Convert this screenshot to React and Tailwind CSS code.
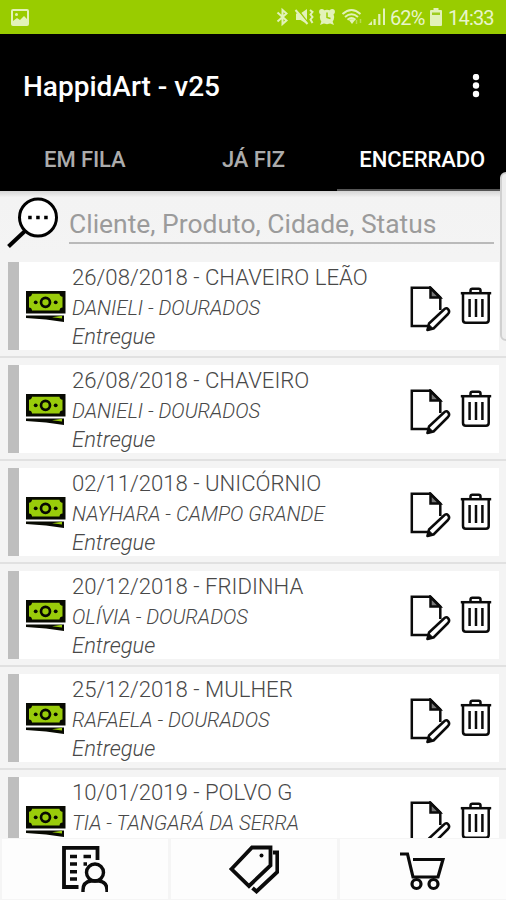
import React from 'react';

const orders = [
  { title: '26/08/2018 - CHAVEIRO LEÃO', client: 'DANIELI - DOURADOS', status: 'Entregue' },
  { title: '26/08/2018 - CHAVEIRO', client: 'DANIELI - DOURADOS', status: 'Entregue' },
  { title: '02/11/2018 - UNICÓRNIO', client: 'NAYHARA - CAMPO GRANDE', status: 'Entregue' },
  { title: '20/12/2018 - FRIDINHA', client: 'OLÍVIA - DOURADOS', status: 'Entregue' },
  { title: '25/12/2018 - MULHER', client: 'RAFAELA - DOURADOS', status: 'Entregue' },
  { title: '10/01/2019 - POLVO G', client: 'TIA - TANGARÁ DA SERRA', status: '' },
];

function MoneyIcon() {
  return (
    <svg className="block h-8 w-10 shrink-0" viewBox="0 0 40 32">
      <rect x="0" y="0" width="39.5" height="22.5" fill="#080a02" />
      <path d="M6 2.800H33.500Q33.700 5.500 36.500 5.700V16.500Q33.700 16.700 33.500 19.500H6Q5.800 16.700 3 16.500V5.700Q5.800 5.500 6 2.800Z" fill="#99cc0a" />
      <circle cx="19.500" cy="11.300" r="4.500" fill="none" stroke="#080a02" strokeWidth="2.700" />
      <circle cx="9.700" cy="11.300" r="1.900" fill="#080a02" />
      <circle cx="29.700" cy="11.300" r="1.900" fill="#080a02" />
      <path d="M0 24.500H38V31L20 28.500L0 27Z" fill="#080a02" />
      <path d="M26 26.200L36 24.700V27.500Z" fill="#99cc0a" />
    </svg>
  );
}

function EditIcon() {
  return (
    <svg className="block h-[46px] w-[42px] shrink-0" viewBox="0 0 42 46" fill="none" stroke="#0b0b0b" strokeWidth="2.500">
      <path d="M18 40H1.800V1.800H20.500L30.300 11.500V24" />
      <path d="M20.500 2V11.500H30Z" fill="#777" />
      <path d="M17.500 44L19 37.500L34 23.500Q36.300 21.200 38.200 23.300Q40.200 25.600 38 28L23.500 42.500Z" strokeLinejoin="round" />
      <path d="M17 44.500L18.500 38L23 42.500Z" fill="#0b0b0b" strokeWidth="1" />
    </svg>
  );
}

function TrashIcon() {
  return (
    <svg className="block h-[38px] w-8 shrink-0" viewBox="0 0 32 38" fill="none" stroke="#0b0b0b" strokeWidth="2.500">
      <path d="M0.800 6.200H31.200" />
      <path d="M10.500 6V3.500Q10.500 1.700 12.300 1.700H18.700Q20.500 1.700 20.500 3.500V6" />
      <path d="M3 6V33Q3 35.700 5.700 35.700H26Q28.700 35.700 28.700 33V6" />
      <path d="M9.600 12V30M16 12V30M22.400 12V30" />
    </svg>
  );
}

function StatusIcons() {
  return (
    <svg className="block h-[22px] w-[112px]" viewBox="0 0 112 22" fill="none" stroke="#e2f2b9" strokeWidth="2">
      <path d="M1.500 6.500L10.500 14.500L6.500 18V4L10.500 7.500L1.500 15.500" />
      <g fill="#e2f2b9" stroke="none">
        <path d="M20 7.500H24.500L31 3V18L24.500 14H20Z" />
        <circle cx="51" cy="11" r="7.200" />
        <circle cx="45.800" cy="5.800" r="2.700" />
        <circle cx="56.200" cy="5.800" r="2.700" />
        <path d="M44 19L46 14L49 17ZM58 19L56 14L53 17Z" />
        <path d="M92 19L96 15V19Z" />
        <path d="M97.500 13H99.700V19H97.500ZM102.200 8H104.400V19H102.200ZM107 2.500H109V19H107Z" />
        <path d="M73 14L76 18L79 14Q76 12.500 73 14Z" />
      </g>
      <path d="M21 2.500L33 18" stroke="#99cc00" strokeWidth="1.500" />
      <path d="M19.500 4L31.500 18" strokeWidth="2" />
      <path d="M34 4L36.500 6L34.500 8.500L36.500 11L34.500 13.500L36.500 17" strokeWidth="2" />
      <path d="M51 6.500V11.500L54.500 12.500" stroke="#99cc00" strokeWidth="1.500" />
      <path d="M66.500 8Q75.500 0 84.500 8M69 11Q75.500 5.500 82 11M71.500 13.700Q75.500 10.500 79.500 13.700" strokeWidth="2" />
      <path d="M80.500 14V18M84.500 13V17" strokeWidth="1.500" opacity=".45" />
    </svg>
  );
}

function OrderRow({ order }) {
  return (
    <div className="flex h-[103px] shrink-0 flex-col border-b-2 border-[#e1e1e1] pt-[7px]">
      <div className="flex h-[88px] pl-2 pr-[7px]">
        <div className="w-[11px] shrink-0 bg-[#bebebe]" />
        <div className="flex min-w-0 flex-1 items-start bg-white pl-[7px]">
          <div className="pt-[29px]"><MoneyIcon /></div>
          <div className="min-w-0 flex-1 whitespace-nowrap pl-[6px] text-[#484848]">
            <div className="h-[31px] text-[22.150px] font-light leading-[31px]">{order.title}</div>
            <div className="h-[29px] text-[20.300px] font-light italic leading-[30px]">{order.client}</div>
            <div className="h-[28px] text-[22px] font-light italic leading-[29px]">{order.status}</div>
          </div>
          <div className="pt-[24px]"><EditIcon /></div>
          <div className="pl-[8px] pr-[7px] pt-[25px]"><TrashIcon /></div>
        </div>
      </div>
    </div>
  );
}

export default function App() {
  return (
    <div className="relative flex h-[900px] w-[506px] flex-col overflow-hidden bg-[#f4f4f4] font-['Roboto',sans-serif]">
      <div className="flex h-[34px] shrink-0 items-center bg-[#99cc00] pl-[11px] text-[#e8f5ca]">
        <svg className="block h-[17px] w-[18px]" viewBox="0 0 18 17">
          <rect x="1" y="1" width="16" height="15" rx="1" fill="none" stroke="#e2f2b9" strokeWidth="2" />
          <path d="M2 12L6 9L9 11L13 7L16 10V15H2Z" fill="#e2f2b9" />
          <circle cx="5.500" cy="5.500" r="1.500" fill="#e2f2b9" />
        </svg>
        <div className="ml-[247px]"><StatusIcons /></div>
        <span className="ml-[2px] w-[40px] whitespace-nowrap pt-[2px] text-[20px] tracking-[-0.900px]">62%</span>
        <svg className="block h-[18px] w-[12px]" viewBox="0 0 12 18" fill="#e2f2b9">
          <path d="M3.500 0H8.500V2H11Q12 2 12 3V17Q12 18 11 18H1Q0 18 0 17V3Q0 2 1 2H3.500Z" />
          <path d="M2 4.500H10V7H2Z" fill="#9ecd20" />
        </svg>
        <span className="ml-[6px] whitespace-nowrap pt-[2px] text-[20px] tracking-[-0.800px]">14:33</span>
      </div>

      <header className="flex h-[157px] shrink-0 flex-col bg-black text-white">
        <div className="flex h-[103px] items-center justify-between pl-[23px] pr-[26px]">
          <h1 className="whitespace-nowrap pt-[2px] text-[28px] font-medium">HappidArt - v25</h1>
          <svg className="block h-6 w-2" viewBox="0 0 8 24" fill="white">
            <circle cx="4" cy="3" r="3.200" /><circle cx="4" cy="11.500" r="3.200" /><circle cx="4" cy="20" r="3.200" />
          </svg>
        </div>
        <nav className="grid h-[54px] grid-cols-3 text-center text-[22px] font-medium leading-[45px] tracking-[-0.100px]">
          <span className="pl-px text-[#acacac]">EM FILA</span>
          <span className="pl-px text-[#acacac]">JÁ FIZ</span>
          <span className="border-b-2 border-[#555] pl-px">ENCERRADO</span>
        </nav>
      </header>

      <div className="flex h-[64px] shrink-0 bg-linear-to-b from-[#d6d6d6] via-[#f3f3f3] via-10% to-[#f4f4f4] pl-[7px]">
        <svg className="mt-[6px] block h-[52px] w-[52px] shrink-0" viewBox="0 0 52 52" fill="none" stroke="black">
          <circle cx="31" cy="20.500" r="18.500" fill="#fff" strokeWidth="3" />
          <path d="M18 34L1.500 49.500" strokeWidth="4" />
          <path d="M21.200 20.500H24.700M29.200 20.500H32.700M37.200 20.500H40.700" strokeWidth="3.500" />
        </svg>
        <div className="ml-[10px] mr-3 flex h-[53px] flex-1 items-center border-b-2 border-[#bababa] pt-[15px] text-[26.450px] text-[#9b9b9b]">
          <span className="whitespace-nowrap">Cliente, Produto, Cidade, Status</span>
        </div>
      </div>

      <main className="flex min-h-0 flex-1 flex-col overflow-hidden">
        {orders.map((order) => <OrderRow key={order.title} order={order} />)}
      </main>

      <footer className="grid h-[62px] shrink-0 grid-cols-3 gap-[3px] bg-[#f5f5f5] pb-px pl-[2px] pt-px">
        <button className="flex items-start justify-center bg-[#fdfdfd] pt-[7px]">
          <svg className="block h-[47px] w-[46px]" viewBox="0 0 46 47" fill="none" stroke="#0b0b0b" strokeWidth="3.800">
            <path d="M16.500 41H2V1.800H35.500V14" />
            <path d="M8 10.500H15M21.500 10.500H29M8 18H15M21.500 18H25M8 25.700H15M8 33H15" strokeWidth="3.500" />
            <circle cx="33" cy="26.500" r="8.500" strokeWidth="3.400" />
            <path d="M21 46V44Q21 36 29 35H37Q45 36 45 44V46" strokeWidth="3.400" />
          </svg>
        </button>
        <button className="flex items-start justify-center bg-[#fdfdfd] pt-[6px]">
          <svg className="block h-[49px] w-[50px]" viewBox="0 0 50 49" fill="none" stroke="#0b0b0b" strokeWidth="3.800">
            <path d="M2.500 24L23 2.500H41.500V20.500L20 41Z" />
            <path d="M44 7.500H48.300V27L27.500 46.500L23.500 43" />
            <circle cx="32.500" cy="10.500" r="2" fill="#0b0b0b" stroke="none" />
          </svg>
        </button>
        <button className="flex items-start justify-center bg-[#fdfdfd] pr-[3px] pt-[12px]">
          <svg className="block h-10 w-[46px]" viewBox="0 0 46 40" fill="none" stroke="#0b0b0b" strokeWidth="3.200">
            <path d="M1 3H8.500L14 26H39L44 8.500H14" />
            <circle cx="17.500" cy="33" r="4.500" /><circle cx="34.500" cy="33" r="4.500" />
          </svg>
        </button>
      </footer>
      <div className="absolute right-[-9px] top-[172px] h-[169px] w-[15px] rounded-md border-2 border-[#d0d0d0] bg-[#eeeeee]" />
    </div>
  );
}
